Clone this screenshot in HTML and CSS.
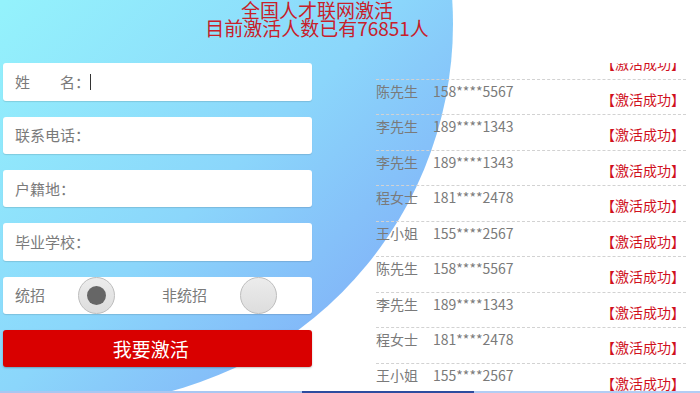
FILE: index.html
```html
<!DOCTYPE html>
<html lang="zh-CN">
<head>
<meta charset="utf-8">
<title>全国人才联网激活</title>
<link rel="stylesheet" href="styles.css">
</head>
<body>
<div class="page">
  <div class="bg-circle"></div>
  <header class="header">
    <div class="title-line">全国人才联网激活</div>
    <div class="title-line">目前激活人数已有76851人</div>
  </header>
  <div class="content">
    <form class="form">
      <div class="field"><span class="label">姓　　名：</span><span class="caret"></span><input class="input" type="text"></div>
      <div class="field"><span class="label">联系电话：</span><input class="input" type="text"></div>
      <div class="field"><span class="label">户籍地：</span><input class="input" type="text"></div>
      <div class="field"><span class="label">毕业学校：</span><input class="input" type="text"></div>
      <div class="field radio-field">
        <span class="label">统招</span><span class="radio checked"></span>
        <span class="label second">非统招</span><span class="radio"></span>
      </div>
      <button class="submit" type="button">我要激活</button>
    </form>
    <div class="list-wrap">
      <ul class="list">
        <li class="row"><span class="name">王小姐</span><span class="phone">155****2567</span><span class="status">【激活成功】</span></li>
        <li class="row"><span class="name">陈先生</span><span class="phone">158****5567</span><span class="status">【激活成功】</span></li>
        <li class="row"><span class="name">李先生</span><span class="phone">189****1343</span><span class="status">【激活成功】</span></li>
        <li class="row"><span class="name">李先生</span><span class="phone">189****1343</span><span class="status">【激活成功】</span></li>
        <li class="row"><span class="name">程女士</span><span class="phone">181****2478</span><span class="status">【激活成功】</span></li>
        <li class="row"><span class="name">王小姐</span><span class="phone">155****2567</span><span class="status">【激活成功】</span></li>
        <li class="row"><span class="name">陈先生</span><span class="phone">158****5567</span><span class="status">【激活成功】</span></li>
        <li class="row"><span class="name">李先生</span><span class="phone">189****1343</span><span class="status">【激活成功】</span></li>
        <li class="row"><span class="name">程女士</span><span class="phone">181****2478</span><span class="status">【激活成功】</span></li>
        <li class="row"><span class="name">王小姐</span><span class="phone">155****2567</span><span class="status">【激活成功】</span></li>
      </ul>
    </div>
  </div>
  <div class="strip">
    <span class="seg seg-a"></span><span class="seg seg-b"></span><span class="seg seg-c"></span>
  </div>
</div>
</body>
</html>
```

FILE: styles.css
```css
html, body {
  margin: 0;
  padding: 0;
  background: #fff;
  overflow: hidden;
}

.page {
  position: relative;
  width: 700px;
  height: 393px;
  overflow: hidden;
  font-family: "Noto Sans CJK SC", "Microsoft YaHei", "Noto Sans", sans-serif;
}

.bg-circle {
  position: absolute;
  left: -307px;
  top: -356px;
  width: 760px;
  height: 760px;
  border-radius: 50%;
  background: linear-gradient(135deg, #94f2fc 44%, #8bd6fb 70%, #82b6f8 87%);
  z-index: 0;
}

.header,
.content,
.strip {
  position: relative;
  z-index: 1;
}

.header {
  padding: 1px 66px 0 0;
  text-align: center;
  color: #c8202a;
  font-size: 19px;
  line-height: 18px;
}

.content {
  display: flex;
  align-items: flex-start;
  margin-top: 24.7px;
  height: 329.3px;
  padding-left: 3px;
}

.form {
  width: 308.5px;
  margin: 1.6px 0 0;
  display: flex;
  flex-direction: column;
  gap: 16px;
}

.field {
  height: 37.33px;
  background: #fff;
  border-radius: 3px;
  box-shadow: 0 1px 1px rgba(0, 0, 0, 0.12);
  display: flex;
  align-items: center;
  padding-left: 12px;
  box-sizing: border-box;
}

.label {
  font-size: 15px;
  color: #7a7a7a;
  white-space: nowrap;
  line-height: 20px;
}

.caret {
  width: 1px;
  height: 16px;
  background: #333;
}

.input {
  flex: 1;
  min-width: 0;
  border: 0;
  outline: 0;
  background: transparent;
  height: 100%;
  padding: 0;
  font: inherit;
}

.radio {
  width: 37px;
  height: 37px;
  box-sizing: border-box;
  border-radius: 50%;
  border: 1px solid #bdbdbd;
  background: linear-gradient(180deg, #ececec, #dddddd);
  margin-left: 33px;
  display: flex;
  align-items: center;
  justify-content: center;
}

.radio.checked::after {
  content: "";
  width: 19px;
  height: 19px;
  border-radius: 50%;
  background: #666;
}

.label.second {
  margin-left: 47px;
}

.submit {
  height: 37.33px;
  border: 0;
  border-radius: 3px;
  background: #d90000;
  color: #fff;
  font-family: inherit;
  font-size: 19px;
  line-height: 24px;
  padding: 0 13px 0 0;
  box-shadow: 0 1px 2px rgba(0, 0, 0, 0.25);
}

.list-wrap {
  margin: 1.3px 0 0 64.5px;
  width: 310px;
  height: 328px;
  overflow: hidden;
}

.list {
  list-style: none;
  margin: -18.7px 0 0;
  padding: 0;
}

.row {
  height: 35.5px;
  box-sizing: border-box;
  border-bottom: 1px dashed #d2d2d2;
  display: flex;
  align-items: flex-start;
  font-size: 14px;
  color: #7a7a7a;
}

.name,
.phone {
  line-height: 22px;
}

.phone {
  margin-left: 15px;
}

.status {
  margin-left: auto;
  margin-right: 1px;
  padding-top: 8px;
  line-height: 22px;
  color: #d0111e;
}

.strip {
  display: flex;
  height: 2px;
}

.seg-a {
  width: 302px;
  background: #a9c7f2;
}

.seg-b {
  width: 172px;
  background: #2d4c9f;
}

.seg-c {
  flex: 1;
  background: #b2cdf4;
}
```
